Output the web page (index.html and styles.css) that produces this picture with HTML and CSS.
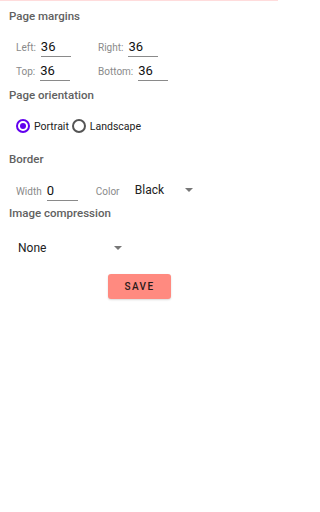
FILE: index.html
```html
<!DOCTYPE html>
<html>
<head>
<meta charset="utf-8">
<link rel="stylesheet" href="styles.css">
</head>
<body>
<div class="topline"></div>
<main class="page">
  <h2 class="heading">Page margins</h2>
  <div class="grid">
    <div class="field"><span class="label">Left:</span><span class="input">36</span></div>
    <div class="field"><span class="label">Right:</span><span class="input">36</span></div>
    <div class="field"><span class="label">Top:</span><span class="input">36</span></div>
    <div class="field"><span class="label">Bottom:</span><span class="input">36</span></div>
  </div>
  <h2 class="heading h-orient">Page orientation</h2>
  <div class="radios">
    <span class="radio checked"><span class="dot"></span></span><span class="rlabel">Portrait</span>
    <span class="radio"></span><span class="rlabel">Landscape</span>
  </div>
  <h2 class="heading h-border">Border</h2>
  <div class="border-row">
    <span class="label">Width</span><span class="input input-w">0</span>
    <span class="label color-label">Color</span>
    <span class="select select-color"><span class="sval">Black</span><span class="arrow"></span></span>
  </div>
  <h2 class="heading h-comp">Image compression</h2>
  <div class="select select-comp"><span class="sval">None</span><span class="arrow"></span></div>
  <div class="actions"><button class="save">SAVE</button></div>
</main>
</body>
</html>
```
FILE: styles.css
```css
html, body { margin: 0; padding: 0; background: #fff; }
body { font-family: Roboto, "Liberation Sans", sans-serif; width: 278px; height: 512px; overflow: hidden; }
.topline { height: 1px; background: #ffdcdc; }
.page { padding: 0 9px; }
.heading { margin: 0; font-size: 11.5px; font-weight: 500; color: #616161; line-height: 14px; }
.page > .heading:first-child { padding-top: 8px; }
.grid { display: grid; grid-template-columns: 82px auto; row-gap: 6px; padding: 16px 0 0 7px; }
.field { display: flex; align-items: flex-end; }
.label { font-size: 10px; color: #8a8a8a; margin-right: 5px; padding-bottom: 3px; line-height: 12px; }
.input { font-size: 13px; color: #111; width: 30px; border-bottom: 1px solid #8a8a8a; line-height: 16px; padding-bottom: 1px; box-sizing: border-box; height: 18px; }
.h-orient { margin-top: 7px; }
.radios { display: flex; align-items: center; padding: 16px 0 0 7px; height: 16px; }
.radio { width: 10px; height: 10px; border: 2px solid #555; border-radius: 50%; display: flex; align-items: center; justify-content: center; flex: none; }
.radio.checked { border-color: #6200ee; }
.dot { width: 6px; height: 6px; border-radius: 50%; background: #6200ee; }
.rlabel { font-size: 10.5px; color: #222; margin: 0 3px 0 4px; }
.h-border { margin-top: 18px; }
.border-row { display: flex; align-items: flex-end; padding: 15px 0 0 7px; }
.input-w { width: 31px; }
.color-label { margin-left: 18px; margin-right: 0; width: 39px; }
.select { display: flex; align-items: center; position: relative; }
.select-color { width: 58px; height: 18px; padding-bottom: 2px; }
.sval { font-size: 12px; color: #222; }
.arrow { width: 0; height: 0; border-left: 4px solid transparent; border-right: 4px solid transparent; border-top: 4px solid #777; margin-left: auto; }
.h-comp { margin-top: 5px; }
.select-comp { width: 104px; padding: 21px 0 0 9px; height: 14px; }
.actions { display: flex; justify-content: center; padding: 19px 0 0 0; }
.save { width: 63px; height: 25px; background: #ff8a80; border: none; border-radius: 3px; font-family: Roboto, "Liberation Sans", sans-serif; font-size: 10px; font-weight: 500; letter-spacing: 1.4px; color: #2a1a1a; box-shadow: 0 1px 2px rgba(0,0,0,0.15); margin-left: 1px; }
```
